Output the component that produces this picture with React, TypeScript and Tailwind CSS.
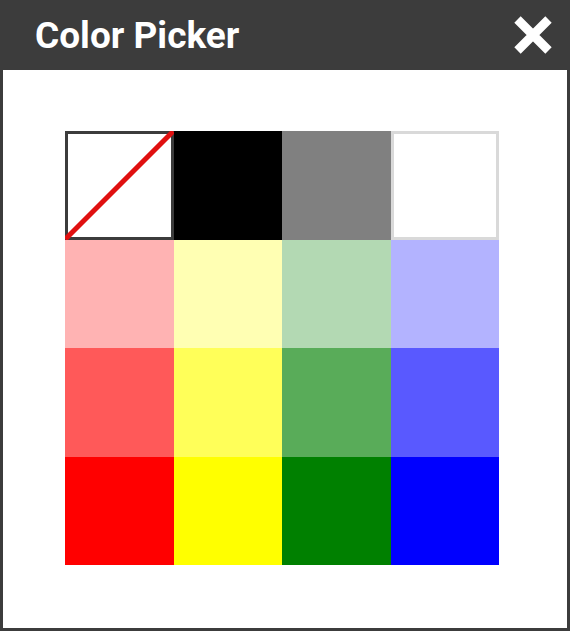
const swatches = [
    'none', '#000000', '#808080', '#ffffff',
    '#ffb3b3', '#ffffb3', '#b3d9b3', '#b3b3ff',
    '#ff5959', '#ffff59', '#59ac59', '#5959ff',
    '#ff0000', '#ffff00', '#008000', '#0000ff',
];

const swatchClass: Record<string, string> = {
    '#000000': 'bg-[#000000]',
    '#808080': 'bg-[#808080]',
    '#ffffff': 'bg-white border-[3px] border-[#d9d9d9]',
    '#ffb3b3': 'bg-[#ffb3b3]',
    '#ffffb3': 'bg-[#ffffb3]',
    '#b3d9b3': 'bg-[#b3d9b3]',
    '#b3b3ff': 'bg-[#b3b3ff]',
    '#ff5959': 'bg-[#ff5959]',
    '#ffff59': 'bg-[#ffff59]',
    '#59ac59': 'bg-[#59ac59]',
    '#5959ff': 'bg-[#5959ff]',
    '#ff0000': 'bg-[#ff0000]',
    '#ffff00': 'bg-[#ffff00]',
    '#008000': 'bg-[#008000]',
    '#0000ff': 'bg-[#0000ff]',
};

function CloseIcon() {
    return (
        <svg width="38" height="38" viewBox="0 0 38 38">
            <path d="M3.5 3.5 L34.5 34.5 M34.5 3.5 L3.5 34.5" stroke="#ffffff" strokeWidth="9" fill="none" />
        </svg>
    );
}

function NoColor() {
    return (
        <div className="relative h-full w-full border-[3px] border-[#3c3c3c] bg-white">
            <svg className="absolute -inset-[3px] h-[calc(100%+6px)] w-[calc(100%+6px)]" viewBox="0 0 108 108" preserveAspectRatio="none">
                <line x1="2" y1="106" x2="106" y2="2" stroke="#e01010" strokeWidth="5" strokeLinecap="round" />
            </svg>
        </div>
    );
}

export default function App() {
    return (
        <div className="flex h-[631px] w-[570px] flex-col bg-[#3c3c3c] font-['Roboto',sans-serif]">
            <div className="flex h-[70px] shrink-0 items-center justify-between pl-[35px] pr-[18px]">
                <h1 className="text-[37px] font-bold leading-none text-white">Color Picker</h1>
                <button className="flex items-center justify-center" title="Close">
                    <CloseIcon />
                </button>
            </div>
            <div className="mx-[3px] mb-[3px] flex-1 bg-white pl-[62px] pt-[61px]">
                <div className="grid h-[434px] w-[434px] grid-cols-4 grid-rows-4">
                    {swatches.map((c, i) => (
                        <div key={i} className="h-full w-full">
                            {c === 'none' ? <NoColor /> : <div className={`h-full w-full ${swatchClass[c]}`} />}
                        </div>
                    ))}
                </div>
            </div>
        </div>
    );
}
